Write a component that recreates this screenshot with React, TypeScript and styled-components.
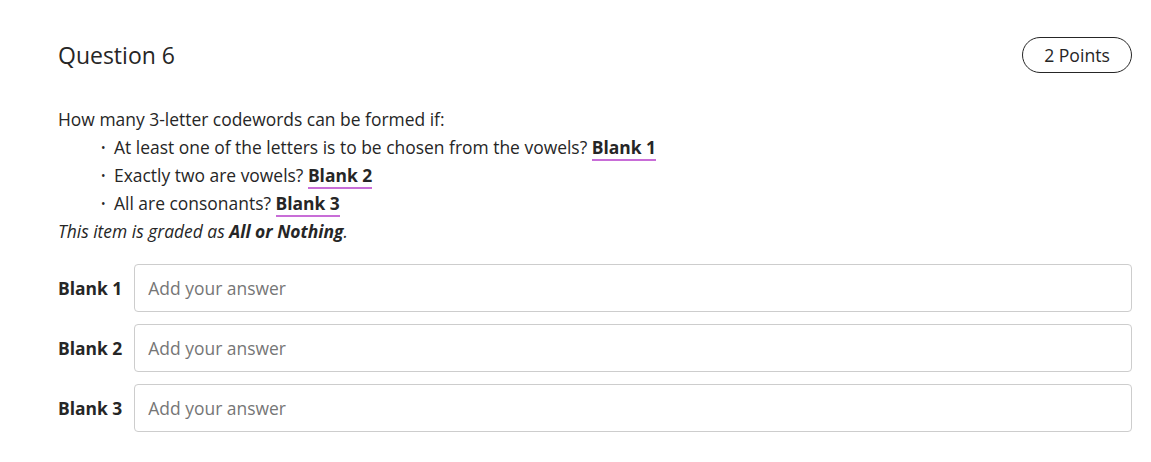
import styled, { createGlobalStyle } from 'styled-components'

const GlobalStyle = createGlobalStyle`
  body {
    margin: 0;
    background: #ffffff;
    font-family: 'Open Sans', 'Noto Sans', sans-serif;
    color: #262626;
  }
`

const Page = styled.div`
  padding: 37px 19px 30px 58px;
`

const Header = styled.div`
  display: flex;
  justify-content: space-between;
  align-items: center;
`

const Title = styled.h2`
  margin: 0;
  font-size: 23px;
  font-weight: 400;
  color: #262626;
`

const PointsPill = styled.span`
  display: inline-flex;
  align-items: center;
  justify-content: center;
  box-sizing: border-box;
  width: 110px;
  height: 36px;
  border: 1px solid #262626;
  border-radius: 18px;
  font-size: 17.6px;
`

const Prompt = styled.div`
  margin-top: 32px;
  font-size: 17.45px;
  line-height: 28px;
`

const BulletList = styled.ul`
  list-style: none;
  margin: 0;
  padding: 0 0 0 43px;
`

const Bullet = styled.li`
  &::before {
    content: '•';
    display: inline-block;
    width: 13px;
    font-size: 12px;
    line-height: 1;
    vertical-align: 2px;
  }
`

const BlankRef = styled.strong`
  font-weight: 700;
  border-bottom: 2px solid #c86dd7;
`

const Note = styled.div`
  font-style: italic;
`

const Answers = styled.div`
  margin-top: 19px;
  display: flex;
  flex-direction: column;
  gap: 12px;
`

const AnswerRow = styled.label`
  display: flex;
  align-items: center;
  gap: 12px;
`

const AnswerLabel = styled.span`
  font-size: 17.45px;
  font-weight: 700;
  white-space: nowrap;
`

const AnswerInput = styled.input`
  flex: 1;
  box-sizing: border-box;
  height: 48px;
  border: 1px solid #cdcdcd;
  border-radius: 4px;
  padding: 0 13px;
  font-family: 'Open Sans', 'Noto Sans', sans-serif;
  font-size: 17.45px;
  color: #262626;
  outline: none;

  &::placeholder {
    color: #767676;
  }
`

const blanks = ['Blank 1', 'Blank 2', 'Blank 3']

export default function App() {
  return (
    <>
      <GlobalStyle />
      <Page>
        <Header>
          <Title>Question 6</Title>
          <PointsPill>2 Points</PointsPill>
        </Header>
        <Prompt>
          <div>How many 3-letter codewords can be formed if:</div>
          <BulletList>
            <Bullet>
              At least one of the letters is to be chosen from the vowels? <BlankRef>Blank 1</BlankRef>
            </Bullet>
            <Bullet>
              Exactly two are vowels? <BlankRef>Blank 2</BlankRef>
            </Bullet>
            <Bullet>
              All are consonants? <BlankRef>Blank 3</BlankRef>
            </Bullet>
          </BulletList>
          <Note>
            This item is graded as <strong>All or Nothing</strong>.
          </Note>
        </Prompt>
        <Answers>
          {blanks.map((b) => (
            <AnswerRow key={b}>
              <AnswerLabel>{b}</AnswerLabel>
              <AnswerInput placeholder="Add your answer" />
            </AnswerRow>
          ))}
        </Answers>
      </Page>
    </>
  )
}
